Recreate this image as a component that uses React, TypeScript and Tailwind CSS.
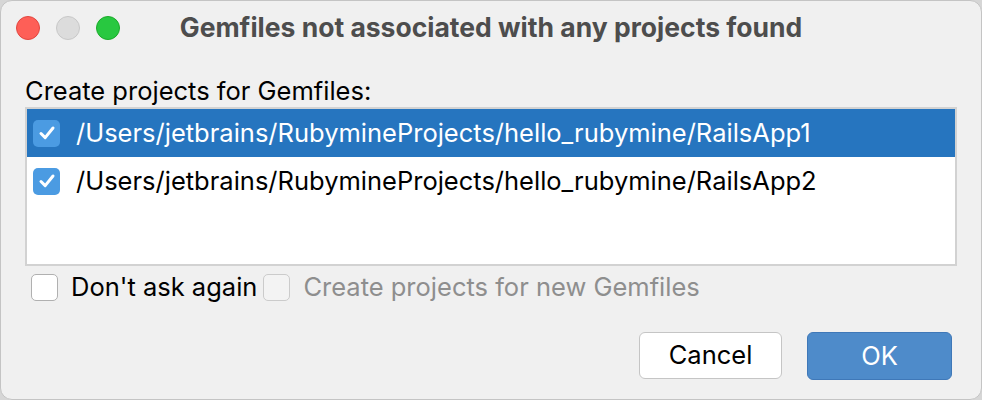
import React, { useState } from 'react';

const paths = [
  '/Users/jetbrains/RubymineProjects/hello_rubymine/RailsApp1',
  '/Users/jetbrains/RubymineProjects/hello_rubymine/RailsApp2',
];

const CheckMark = () => (
  <svg width="20" height="20" viewBox="0 0 20 20" fill="none">
    <path d="M4 10.5 L8.2 14.6 L16 5" stroke="white" strokeWidth="3" strokeLinecap="round" strokeLinejoin="round" />
  </svg>
);

export default function App() {
  const [selected, setSelected] = useState(0);
  const [checked, setChecked] = useState([true, true]);
  const [dontAsk, setDontAsk] = useState(false);

  return (
    <div className="w-[982px] h-[400px] bg-[#d6d6d6] font-['Inter','Liberation_Sans',sans-serif]">
      <div className="h-full rounded-[12px] bg-[#f0f0f0] flex flex-col border border-[#c4c4c4]">
        {/* title bar */}
        <div className="h-[54px] flex items-center">
          <div className="w-[120px] flex items-center gap-4 pl-[15px]">
            <span className="w-6 h-6 rounded-full bg-[#fe5f57] border border-[#e2463f]" />
            <span className="w-6 h-6 rounded-full bg-[#dcdcdc] border border-[#c8c8c8]" />
            <span className="w-6 h-6 rounded-full bg-[#28c840] border border-[#1aab29]" />
          </div>
          <div className="flex-1 text-center text-[26.5px] font-bold text-[#4d4d4d]">
            Gemfiles not associated with any projects found
          </div>
          <div className="w-[120px]" />
        </div>

        <div className="px-[24px] pt-[22px] text-[25.5px] leading-[28px] text-black">
          Create projects for Gemfiles:
        </div>

        <div className="mx-[24px] mt-[2px] h-[159px] border-2 border-[#d2d2d2] bg-white">
          {paths.map((p, i) => (
            <div
              key={p}
              onClick={() => setSelected(i)}
              className={`h-12 flex items-center pl-[6px] gap-4 text-[25.5px] ${selected === i ? 'bg-[#2675bf] text-white' : 'text-black'}`}
            >
              <button
                onClick={() => setChecked(checked.map((c, j) => (j === i ? !c : c)))}
                className={`w-[27px] h-[27px] rounded-[5px] flex items-center justify-center ${checked[i] ? 'bg-[#4b9be2]' : 'bg-white border border-[#b5b5b5]'}`}
              >
                {checked[i] && <CheckMark />}
              </button>
              <span>{p}</span>
            </div>
          ))}
        </div>

        <div className="flex items-center pl-[30px] mt-[7px] h-[28px] text-[25.5px]">
          <button
            onClick={() => setDontAsk(!dontAsk)}
            className={`w-[27px] h-[27px] rounded-[5px] border flex items-center justify-center ${dontAsk ? 'bg-[#4b9be2] border-[#4b9be2]' : 'bg-white border-[#b0b0b0]'}`}
          >
            {dontAsk && <CheckMark />}
          </button>
          <span className="ml-[13px] text-black">Don't ask again</span>
          <span className="ml-[6px] w-[27px] h-[27px] rounded-[5px] border border-[#cbcbcb] bg-[#f3f3f3]" />
          <span className="ml-[13px] text-[#8e8e8e]">Create projects for new Gemfiles</span>
        </div>

        <div className="flex justify-end gap-[25px] pr-[29px] mt-[31px]">
          <button className="w-[143px] h-[47px] rounded-[6px] bg-white border border-[#c5c5c5] text-[25.5px] text-black">
            Cancel
          </button>
          <button className="w-[145px] h-[48px] rounded-[6px] bg-[#4e8bca] border border-[#3f78b8] text-[25.5px] text-white">
            OK
          </button>
        </div>
      </div>
    </div>
  );
}
